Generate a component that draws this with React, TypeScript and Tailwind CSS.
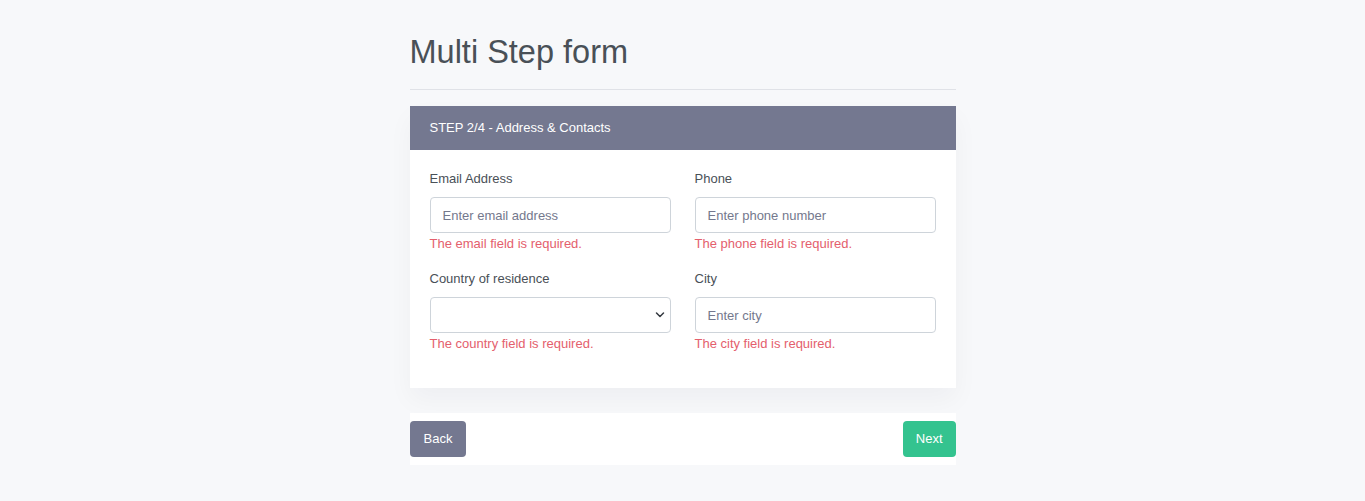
import React from 'react';

interface FieldProps {
  label: string;
  placeholder?: string;
  error: string;
  select?: boolean;
}

const Field: React.FC<FieldProps> = ({ label, placeholder, error, select }) => {
  return (
    <div className="mb-[17px]">
      <label className="block text-[13px] leading-[18px] text-[#495057] mb-[9px]">{label}</label>
      {select ? (
        <div className="relative">
          <select className="w-full h-[36px] rounded-[4px] border border-[#ced4da] bg-white px-3 text-[13px] text-[#495057] appearance-none outline-none">
            <option value=""></option>
          </select>
          <svg
            className="absolute right-[5px] top-[13px] pointer-events-none"
            width="12"
            height="10"
            viewBox="0 0 12 10"
            fill="none"
          >
            <path d="M2.5 3l3.5 3.5L9.5 3" stroke="#343a40" strokeWidth="1.5" strokeLinecap="round" strokeLinejoin="round" />
          </svg>
        </div>
      ) : (
        <input
          type="text"
          placeholder={placeholder}
          className="w-full h-[36px] rounded-[4px] border border-[#ced4da] bg-white px-3 text-[13px] text-[#495057] placeholder:text-[#74788d] outline-none"
        />
      )}
      <div className="mt-[2px] text-[13px] leading-[18px] text-[#e4606d]">{error}</div>
    </div>
  );
};

export default function App() {
  return (
    <div
      className="min-h-[501px] bg-[#f7f8fa]"
      style={{ fontFamily: '"Liberation Sans", Arial, sans-serif' }}
    >
      <div className="w-[546px] mx-auto pt-[33px]">
        <h1 className="text-[32.5px] leading-[38px] text-[#495057]">Multi Step form</h1>
        <hr className="mt-[18px] border-0 border-t border-[#e0e2e7]" />

        <div className="mt-[16px] bg-white shadow-[0_12px_24px_rgba(18,38,63,0.04)]">
          <div className="h-[44px] px-5 flex items-center bg-[#747890] text-white text-[13px]">
            STEP 2/4 - Address &amp; Contacts
          </div>
          <div className="px-5 pt-5 pb-[18px] grid grid-cols-2 gap-x-6">
            <Field label="Email Address" placeholder="Enter email address" error="The email field is required." />
            <Field label="Phone" placeholder="Enter phone number" error="The phone field is required." />
            <Field label="Country of residence" select error="The country field is required." />
            <Field label="City" placeholder="Enter city" error="The city field is required." />
          </div>
        </div>

        <div className="mt-[25px] bg-white py-2 flex justify-between">
          <button
            type="button"
            className="h-[36px] px-[14px] rounded-[4px] bg-[#747890] text-white text-[13px]"
          >
            Back
          </button>
          <button
            type="button"
            className="h-[36px] px-[13px] rounded-[4px] bg-[#34c38f] text-white text-[13px]"
          >
            Next
          </button>
        </div>
      </div>
    </div>
  );
}
